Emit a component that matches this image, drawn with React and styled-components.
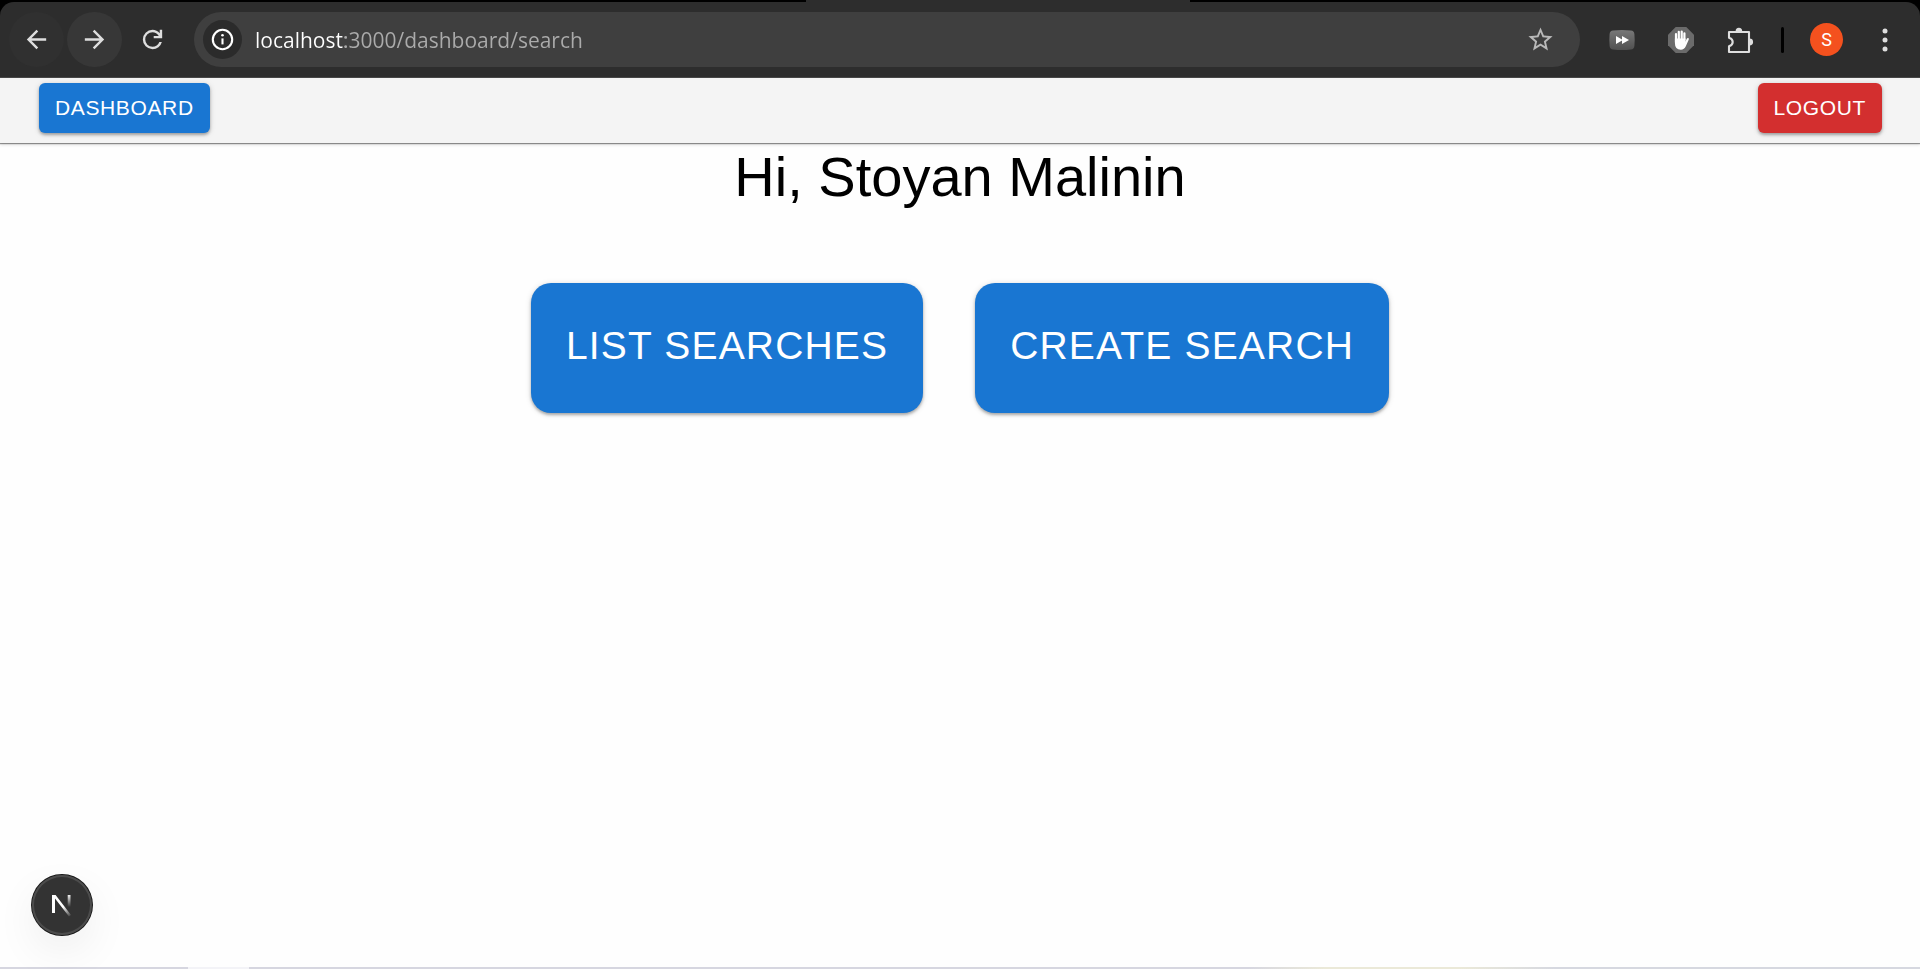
import React from "react";
import styled, { createGlobalStyle } from "styled-components";

const GlobalStyle = createGlobalStyle`
  *, *::before, *::after { box-sizing: border-box; }
  body {
    margin: 0;
    background: #fefefe;
    color: #000;
    font-family: "Liberation Sans", Arial, sans-serif;
  }
  button { font: inherit; border: 0; cursor: pointer; }
`;

const Page = styled.div`
  display: flex;
  flex-direction: column;
  min-height: 100vh;
`;

/* Browser chrome */
const Browser = styled.div`
  background: #000;
`;

const TabStrip = styled.div`
  display: flex;
  height: 2px;
`;

const ActiveTab = styled.div`
  width: 20%;
  margin-left: 42%;
  background: #2d2d2d;
`;

const Toolbar = styled.div`
  display: flex;
  align-items: center;
  gap: 14px;
  height: 76px;
  padding: 0 8px 0 9px;
  background: #2d2d2d;
  border-bottom: 1px solid #484848;
  border-radius: 14px 14px 0 0;
`;

const ToolGroup = styled.div`
  display: flex;
  align-items: center;
  gap: ${(p) => p.$gap}px;
`;

const IconButton = styled.button`
  display: flex;
  align-items: center;
  justify-content: center;
  width: 55px;
  height: 55px;
  padding: 0;
  border-radius: 50%;
  color: ${(p) => p.$color || "#dedede"};
  background: ${(p) => p.$fill || "transparent"};
`;

const AddressBar = styled.div`
  display: flex;
  flex: 1;
  align-items: center;
  gap: 13px;
  height: 55px;
  padding: 0 12px 0 9px;
  border-radius: 28px;
  background: #3f3f3f;
`;

const SiteInfo = styled.button`
  display: flex;
  align-items: center;
  justify-content: center;
  width: 39px;
  height: 39px;
  padding: 0;
  border-radius: 50%;
  color: #fff;
  background: #2b2b2b;
`;

const AddressInput = styled.input`
  flex: 1;
  min-width: 0;
  height: 39px;
  padding: 0;
  border: 0;
  outline: 0;
  font-family: "Open Sans", "Noto Sans", sans-serif;
  font-size: 21px;
  color: #fff;
  background: linear-gradient(90deg, #fff 90px, #ababab 90px);
  -webkit-background-clip: text;
  background-clip: text;
  -webkit-text-fill-color: transparent;
  caret-color: #fff;
`;

const Divider = styled.div`
  width: 3px;
  height: 26px;
  margin-right: 12px;
  border-radius: 2px;
  background: #000;
`;

const Avatar = styled.button`
  width: 33px;
  height: 33px;
  padding: 0;
  border-radius: 50%;
  font-family: Roboto, sans-serif;
  font-size: 18px;
  line-height: 33px;
  color: #fff;
  background: #f4511e;
`;

/* Application */
const AppBar = styled.nav`
  display: flex;
  justify-content: space-between;
  padding: 5px 38px 10px 39px;
  background: #f4f4f4;
  box-shadow: 0 1px 1px rgba(0, 0, 0, 0.4), 0 2px 3px rgba(0, 0, 0, 0.12);
`;

const Button = styled.button`
  padding: 7px 16px;
  border-radius: 6px;
  font-size: 21px;
  line-height: 36px;
  letter-spacing: 0.03em;
  text-transform: uppercase;
  white-space: nowrap;
  color: #fff;
  background: ${(p) => (p.$danger ? "#d32f2f" : "#1976d2")};
  box-shadow: 0 2px 3px rgba(0, 0, 0, 0.28), 0 1px 6px rgba(0, 0, 0, 0.14);
`;

const LargeButton = styled(Button)`
  padding: 29px 35px 33px;
  border-radius: 20px;
  font-size: 39px;
  line-height: 68px;
`;

const Main = styled.main`
  display: flex;
  flex: 1;
  flex-direction: column;
  align-items: center;
`;

const Greeting = styled.h1`
  margin: 0;
  font-size: 56px;
  font-weight: 400;
  line-height: 68px;
`;

const Actions = styled.div`
  display: flex;
  flex-wrap: wrap;
  justify-content: center;
  gap: 52px;
  margin-top: 72px;
`;

const DevTools = styled.button`
  position: fixed;
  left: 32px;
  bottom: 34px;
  display: flex;
  align-items: center;
  justify-content: center;
  width: 60px;
  height: 60px;
  padding: 0;
  border-radius: 50%;
  background: #333;
  box-shadow: 0 0 0 1px #171717, inset 0 0 0 2px #4c4c4c,
    0 16px 48px -8px rgba(0, 0, 0, 0.12);
`;

const Taskbar = styled.footer`
  display: flex;
  height: 2px;
  background: linear-gradient(90deg, #d6d6e0 65%, #ebe9d8 69%, #ebe9d8 76%, #d6d8e0 81%);
`;

const TaskbarItem = styled.div`
  width: 61px;
  margin-left: 188px;
  background: #f3f3f7;
`;

const Glyph = ({ d }) => (
  <svg width="29" height="29" viewBox="0 0 24 24" fill="currentColor" aria-hidden="true">
    <path d={d} />
  </svg>
);

const BACK = "M20 11H7.83l5.59-5.59L12 4l-8 8 8 8 1.41-1.41L7.83 13H20v-2z";
const FORWARD = "M12 4l-1.41 1.41L16.17 11H4v2h12.17l-5.58 5.59L12 20l8-8z";
const RELOAD =
  "M12 20q-3.35 0-5.675-2.325T4 12t2.325-5.675T12 4q1.725 0 3.3.713T18 6.75V4h2v7h-7V9h4.2q-.8-1.4-2.188-2.2T12 6Q9.5 6 7.75 7.75T6 12t1.75 4.25T12 18q1.925 0 3.475-1.1T17.65 14h2.1q-.7 2.65-2.85 4.325T12 20z";
const STAR =
  "M22 9.24l-7.19-.62L12 2 9.19 8.63 2 9.24l5.46 4.73L5.82 21 12 17.27 18.18 21l-1.63-7.03L22 9.24zM12 15.4l-3.76 2.27 1-4.28-3.32-2.88 4.38-.38L12 6.1l1.71 4.04 4.38.38-3.32 2.88 1 4.28L12 15.4z";

const InfoIcon = () => (
  <svg width="23" height="23" viewBox="0 0 23 23" aria-hidden="true">
    <circle cx="11.5" cy="11.5" r="9.7" fill="none" stroke="currentColor" strokeWidth="2.1" />
    <path d="M11.5 10.4v6" stroke="currentColor" strokeWidth="2.1" />
    <circle cx="11.5" cy="7.2" r="1.3" fill="currentColor" />
  </svg>
);

const SpeedIcon = () => (
  <svg width="26" height="22" viewBox="0 0 26 22" aria-hidden="true">
    <defs>
      <linearGradient id="speed" x1="0" y1="0" x2="0" y2="1">
        <stop offset="0" stopColor="#787878" />
        <stop offset="1" stopColor="#505050" />
      </linearGradient>
    </defs>
    <path
      d="M4 1.5Q13 .5 22 1.5Q25 1.8 25.4 5Q26 11 25.4 17Q25 20.2 22 20.5Q13 21.5 4 20.5Q1 20.2.6 17Q0 11 .6 5Q1 1.8 4 1.5z"
      fill="url(#speed)"
    />
    <path d="M7 6.9v8.2l6-3.7v3.7l7-4.1-7-4.1v3.7z" fill="#fff" />
  </svg>
);

const HandIcon = () => (
  <svg width="26" height="26" viewBox="0 0 26 26" aria-hidden="true">
    <path d="M7.7 0h10.6L26 7.7v10.6L18.3 26H7.7L0 18.3V7.7z" fill="#6b6b6b" />
    <path
      d="M8 15V7.2M10.8 13V4.8M13.7 13V4.5M16.4 13V6.3"
      stroke="#fff"
      strokeWidth="2.2"
      strokeLinecap="round"
    />
    <path
      d="M6.9 11.5h10.6v3.2l1.1-2.6q.8-1.4 2-.9.5.4.1 1.5l-2.9 6.6q-1.5 3.4-5 3.4-5.9 0-5.9-6.7z"
      fill="#fff"
    />
  </svg>
);

const ExtensionsIcon = () => (
  <svg width="28" height="28" viewBox="0 0 28 28" aria-hidden="true">
    <path
      d="M3 6H23V26H3V20.2C5.2 19.6 6.7 18 6.7 16S5.2 12.4 3 11.8Z"
      fill="none"
      stroke="currentColor"
      strokeWidth="2.1"
      strokeLinejoin="round"
    />
    <path d="M9.6 5.5a3.3 3.7 0 0 1 6.6 0zM23.4 12.6a3.7 3.4 0 0 1 0 6.8z" fill="currentColor" />
  </svg>
);

const MenuIcon = () => (
  <svg width="6" height="24" viewBox="0 0 6 24" fill="currentColor" aria-hidden="true">
    <circle cx="3" cy="3" r="2.5" />
    <circle cx="3" cy="12" r="2.5" />
    <circle cx="3" cy="21" r="2.5" />
  </svg>
);

const NextLogo = () => (
  <svg width="22" height="24" viewBox="0 0 22 24" fill="none" aria-hidden="true">
    <defs>
      <linearGradient id="stem" x1="0" y1="1" x2="0" y2="14" gradientUnits="userSpaceOnUse">
        <stop stopColor="#fff" />
        <stop offset="1" stopColor="#fff" stopOpacity="0" />
      </linearGradient>
      <linearGradient id="diagonal" x1="12" y1="14" x2="19" y2="23" gradientUnits="userSpaceOnUse">
        <stop stopColor="#fff" />
        <stop offset="1" stopColor="#fff" stopOpacity="0.1" />
      </linearGradient>
    </defs>
    <path d="M1 20V2h3.6L20 22l-2 1.5L4 5.4V20z" fill="url(#diagonal)" />
    <path d="M16.7 2h2.8v12h-2.8z" fill="url(#stem)" />
  </svg>
);

export default function App() {
  return (
    <Page>
      <GlobalStyle />
      <Browser>
        <TabStrip>
          <ActiveTab />
        </TabStrip>
        <Toolbar>
          <ToolGroup $gap={3}>
            <IconButton aria-label="Back" $fill="#303030">
              <Glyph d={BACK} />
            </IconButton>
            <IconButton aria-label="Forward" $fill="#373737">
              <Glyph d={FORWARD} />
            </IconButton>
            <IconButton aria-label="Reload">
              <Glyph d={RELOAD} />
            </IconButton>
          </ToolGroup>
          <AddressBar>
            <SiteInfo aria-label="View site information">
              <InfoIcon />
            </SiteInfo>
            <AddressInput
              type="text"
              aria-label="Address"
              spellCheck={false}
              defaultValue="localhost:3000/dashboard/search"
            />
            <IconButton aria-label="Bookmark this page" $color="#b9b9b9">
              <Glyph d={STAR} />
            </IconButton>
          </AddressBar>
          <ToolGroup $gap={4}>
            <IconButton aria-label="Video speed">
              <SpeedIcon />
            </IconButton>
            <IconButton aria-label="Ad blocker">
              <HandIcon />
            </IconButton>
            <IconButton aria-label="Extensions">
              <ExtensionsIcon />
            </IconButton>
          </ToolGroup>
          <Divider />
          <Avatar aria-label="Profile S">S</Avatar>
          <IconButton aria-label="Menu">
            <MenuIcon />
          </IconButton>
        </Toolbar>
      </Browser>
      <AppBar>
        <Button>Dashboard</Button>
        <Button $danger>Logout</Button>
      </AppBar>
      <Main>
        <Greeting>Hi, Stoyan Malinin</Greeting>
        <Actions>
          <LargeButton>List searches</LargeButton>
          <LargeButton>Create search</LargeButton>
        </Actions>
      </Main>
      <DevTools aria-label="Open Next.js Dev Tools">
        <NextLogo />
      </DevTools>
      <Taskbar>
        <TaskbarItem />
      </Taskbar>
    </Page>
  );
}
